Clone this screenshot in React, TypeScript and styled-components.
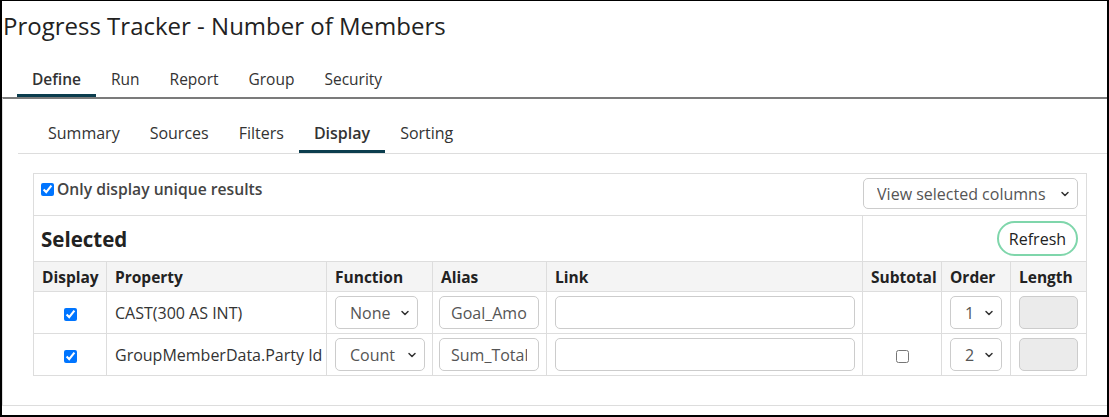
import React from "react";
import styled, { createGlobalStyle } from "styled-components";
import { ChevronDown } from "lucide-react";

const FONT = `"Open Sans", "Noto Sans", Arial, sans-serif`;

const GlobalStyle = createGlobalStyle`
  html, body { margin: 0; padding: 0; background: #fff; }
  body { font-family: ${FONT}; color: #222; }
  * { box-sizing: border-box; }
`;

const Frame = styled.div`
  width: 1109px;
  height: 417px;
  border-style: solid;
  border-color: #000;
  border-width: 1px 2px 2px 2px;
  background: #fff;
  overflow: hidden;
  display: flex;
  flex-direction: column;
`;

const Title = styled.h1`
  margin: 0;
  padding: 10px 0 0 1px;
  font-size: 24px;
  font-weight: 400;
  line-height: 30px;
  color: #222;
`;

const MainTabs = styled.nav`
  display: flex;
  margin-top: 20px;
  padding-left: 15px;
`;

const MainTab = styled.div<{ $active?: boolean }>`
  height: 36px;
  padding: 2px 15px 0;
  display: flex;
  align-items: center;
  font-size: 15.5px;
  font-weight: ${(p) => (p.$active ? 600 : 400)};
  color: #333;
  border-bottom: 3px solid ${(p) => (p.$active ? "#0b3d4e" : "transparent")};
`;

const Panel = styled.section`
  border-top: 2px solid #7b7b7b;
  border-left: 1px solid #ddd;
  border-bottom: 1px solid #ddd;
  padding-bottom: 29px;
`;

const SubTabs = styled.nav`
  display: flex;
  margin: 17px 0 0 15px;
  padding-left: 15px;
  border-bottom: 1px solid #ddd;
`;

const SubTab = styled.div<{ $active?: boolean }>`
  height: 37px;
  padding: 0 15px;
  display: flex;
  align-items: center;
  font-size: 16px;
  font-weight: ${(p) => (p.$active ? 600 : 400)};
  color: #333;
  border-bottom: 3px solid ${(p) => (p.$active ? "#0b3d4e" : "transparent")};
`;

const Body = styled.div`
  padding: 19px 21px 0 30px;
`;

const Grid = styled.table`
  width: 100%;
  border-collapse: collapse;
  table-layout: fixed;
  font-size: 16px;
  color: #333;
`;

const Cell = styled.td<{ $center?: boolean; $right?: boolean; $h?: number; $top?: boolean }>`
  border: 1px solid #ddd;
  padding: 0 8px;
  height: ${(p) => p.$h ?? 42}px;
  vertical-align: ${(p) => (p.$top ? "top" : "middle")};
  text-align: ${(p) => (p.$center ? "center" : p.$right ? "right" : "left")};
  white-space: nowrap;
`;

const BannerCell = styled(Cell)`
  padding-left: 7px;
`;

const HeadCell = styled.th`
  border: 1px solid #ddd;
  background: #f4f4f4;
  padding: 0 6px 0 8px;
  height: 30px;
  text-align: left;
  font-size: 15.5px;
  font-weight: 700;
  color: #222;
  white-space: nowrap;
`;

const TopBar = styled.div`
  display: flex;
  justify-content: space-between;
  align-items: flex-start;
  padding: 4px 0 4px 0;
`;

const UniqueLabel = styled.label`
  display: flex;
  align-items: center;
  gap: 3px;
  font-size: 15.7px;
  font-weight: 600;
  color: #444;
`;

const Check = styled.input.attrs({ type: "checkbox" })`
  width: 13px;
  height: 13px;
  margin: 0;
  accent-color: #0075ff;
  vertical-align: middle;
`;

const SectionTitle = styled.h2`
  margin: 0;
  font-size: 20.5px;
  font-weight: 700;
  color: #222;
`;

const RefreshButton = styled.button`
  height: 35px;
  padding: 0 10px;
  border: 2px solid #7fd6ab;
  border-radius: 18px;
  background: #fff;
  font-family: ${FONT};
  font-size: 16px;
  color: #222;
`;

const SelectWrap = styled.span`
  position: relative;
  display: inline-block;
  vertical-align: middle;
`;

const Select = styled.select<{ $w: number; $h?: number }>`
  appearance: none;
  display: block;
  width: ${(p) => p.$w}px;
  height: ${(p) => p.$h ?? 33}px;
  padding: 0 0 0 ${(p) => (p.$w > 150 ? 13 : 14)}px;
  border: 1px solid #ccc;
  border-radius: 5px;
  background: #fff;
  font-family: ${FONT};
  font-size: 16px;
  color: #555;
`;

const Caret = styled(ChevronDown)`
  position: absolute;
  right: 7px;
  top: 50%;
  transform: translateY(-50%);
  pointer-events: none;
  color: #333;
`;

const TextBox = styled.input<{ $w: number; $disabled?: boolean }>`
  width: ${(p) => p.$w}px;
  height: 33px;
  padding: 0 11px;
  border: 1px solid #ccc;
  border-radius: 5px;
  background: ${(p) => (p.$disabled ? "#ebebeb" : "#fff")};
  font-family: ${FONT};
  font-size: 16px;
  color: #555;
  vertical-align: middle;
`;

type DropProps = { value: string; options: string[]; width: number; height?: number };

const Dropdown = ({ value, options, width, height }: DropProps) => (
  <SelectWrap>
    <Select $w={width} $h={height} defaultValue={value}>
      {options.map((o) => (
        <option key={o}>{o}</option>
      ))}
    </Select>
    <Caret size={12} strokeWidth={3} />
  </SelectWrap>
);

const columns = [
  { name: "Display", width: 73 },
  { name: "Property", width: 220 },
  { name: "Function", width: 106 },
  { name: "Alias", width: 114 },
  { name: "Link", width: 316 },
  { name: "Subtotal", width: 79 },
  { name: "Order", width: 69 },
  { name: "Length", width: 76 },
];

const rows = [
  { property: "CAST(300 AS INT)", fn: "None", fnWidth: 83, alias: "Goal_Amount", subtotal: false, order: "1" },
  { property: "GroupMemberData.Party Id", fn: "Count", fnWidth: 90, alias: "Sum_Total", subtotal: true, order: "2" },
];

export default function App() {
  return (
    <>
      <GlobalStyle />
      <Frame>
        <Title>Progress Tracker - Number of Members</Title>
        <MainTabs>
          <MainTab $active>Define</MainTab>
          <MainTab>Run</MainTab>
          <MainTab>Report</MainTab>
          <MainTab>Group</MainTab>
          <MainTab>Security</MainTab>
        </MainTabs>
        <Panel>
          <SubTabs>
            <SubTab>Summary</SubTab>
            <SubTab>Sources</SubTab>
            <SubTab>Filters</SubTab>
            <SubTab $active>Display</SubTab>
            <SubTab>Sorting</SubTab>
          </SubTabs>
          <Body>
            <Grid>
              <colgroup>
                {columns.map((c) => (
                  <col key={c.name} style={{ width: c.width }} />
                ))}
              </colgroup>
              <tbody>
                <tr>
                  <BannerCell colSpan={8} $h={42} $top>
                    <TopBar>
                      <UniqueLabel>
                        <Check defaultChecked />
                        Only display unique results
                      </UniqueLabel>
                      <Dropdown
                        value="View selected columns"
                        options={["View selected columns", "View all columns"]}
                        width={215}
                        height={31}
                      />
                    </TopBar>
                  </BannerCell>
                </tr>
                <tr>
                  <BannerCell colSpan={5} $h={46}>
                    <SectionTitle>Selected</SectionTitle>
                  </BannerCell>
                  <Cell colSpan={3} $h={46} $right>
                    <RefreshButton>Refresh</RefreshButton>
                  </Cell>
                </tr>
                <tr>
                  {columns.map((c) => (
                    <HeadCell key={c.name}>{c.name}</HeadCell>
                  ))}
                </tr>
                {rows.map((r) => (
                  <tr key={r.property}>
                    <Cell $center>
                      <Check defaultChecked />
                    </Cell>
                    <Cell>{r.property}</Cell>
                    <Cell>
                      <Dropdown value={r.fn} options={["None", "Count", "Sum", "Average"]} width={r.fnWidth} />
                    </Cell>
                    <Cell style={{ paddingLeft: 6 }}>
                      <TextBox $w={100} defaultValue={r.alias} />
                    </Cell>
                    <Cell>
                      <TextBox $w={300} defaultValue="" />
                    </Cell>
                    <Cell $center>{r.subtotal && <Check />}</Cell>
                    <Cell>
                      <Dropdown value={r.order} options={["1", "2"]} width={52} />
                    </Cell>
                    <Cell>
                      <TextBox $w={59} $disabled disabled />
                    </Cell>
                  </tr>
                ))}
              </tbody>
            </Grid>
          </Body>
        </Panel>
      </Frame>
    </>
  );
}
